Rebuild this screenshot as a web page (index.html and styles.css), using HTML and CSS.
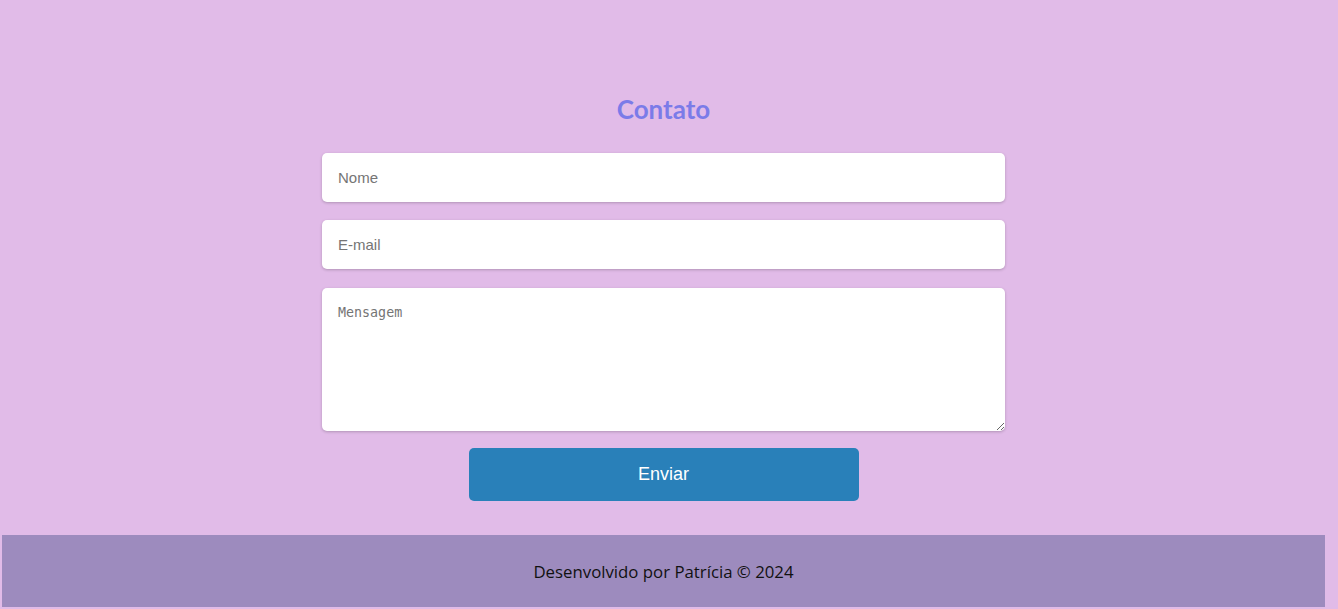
FILE: index.html
```html
<!DOCTYPE html>
<html lang="pt">
<head>
<meta charset="utf-8">
<title>Contato</title>
<link rel="stylesheet" href="styles.css">
</head>
<body>
<div class="page">
  <main class="contact">
    <h1 class="title">Contato</h1>
    <form class="form">
      <input class="field" type="text" placeholder="Nome">
      <input class="field field-mail" type="email" placeholder="E-mail">
      <textarea class="field area" placeholder="Mensagem"></textarea>
      <button class="send" type="button">Enviar</button>
    </form>
  </main>
  <footer class="footer">Desenvolvido por Patrícia © 2024</footer>
</div>
</body>
</html>
```
FILE: styles.css
```css
html, body {
  margin: 0;
  padding: 0;
  background: #e1bbe8;
}
.page {
  width: 1323px;
  margin-left: 2px;
  padding-bottom: 2px;
}
.contact {
  padding-top: 93px;
  padding-bottom: 34px;
  display: flex;
  flex-direction: column;
  align-items: center;
}
.title {
  margin: 0 0 28px 0;
  font-family: Lato, "Open Sans", sans-serif;
  font-weight: 700;
  font-size: 26px;
  line-height: 32px;
  color: #7b7be8;
}
.form {
  width: 683px;
  display: flex;
  flex-direction: column;
  align-items: center;
}
.field {
  box-sizing: border-box;
  width: 100%;
  height: 49px;
  margin: 0 0 18px 0;
  padding: 0 16px;
  border: none;
  border-radius: 5px;
  background: #fff;
  box-shadow: 0 1px 3px rgba(0,0,0,0.22);
  font-family: "Liberation Sans", Arial, sans-serif;
  font-size: 15px;
  color: #333;
}
.field-mail { margin-bottom: 19px; }
.field::placeholder { color: #757575; }
.area {
  height: 143px;
  padding: 17px 16px;
  margin-bottom: 17px;
  font-family: "DejaVu Sans Mono", monospace;
  font-size: 13.33px;
  resize: vertical;
}
.send {
  width: 390px;
  height: 53px;
  border: none;
  border-radius: 5px;
  background: #2980b9;
  color: #fff;
  font-family: "Liberation Sans", Arial, sans-serif;
  font-size: 18px;
}
.footer {
  height: 72px;
  display: flex;
  align-items: center;
  justify-content: center;
  background: #9d8bbe;
  color: #111;
  font-family: "Open Sans", sans-serif;
  font-size: 16.8px;
}
```
